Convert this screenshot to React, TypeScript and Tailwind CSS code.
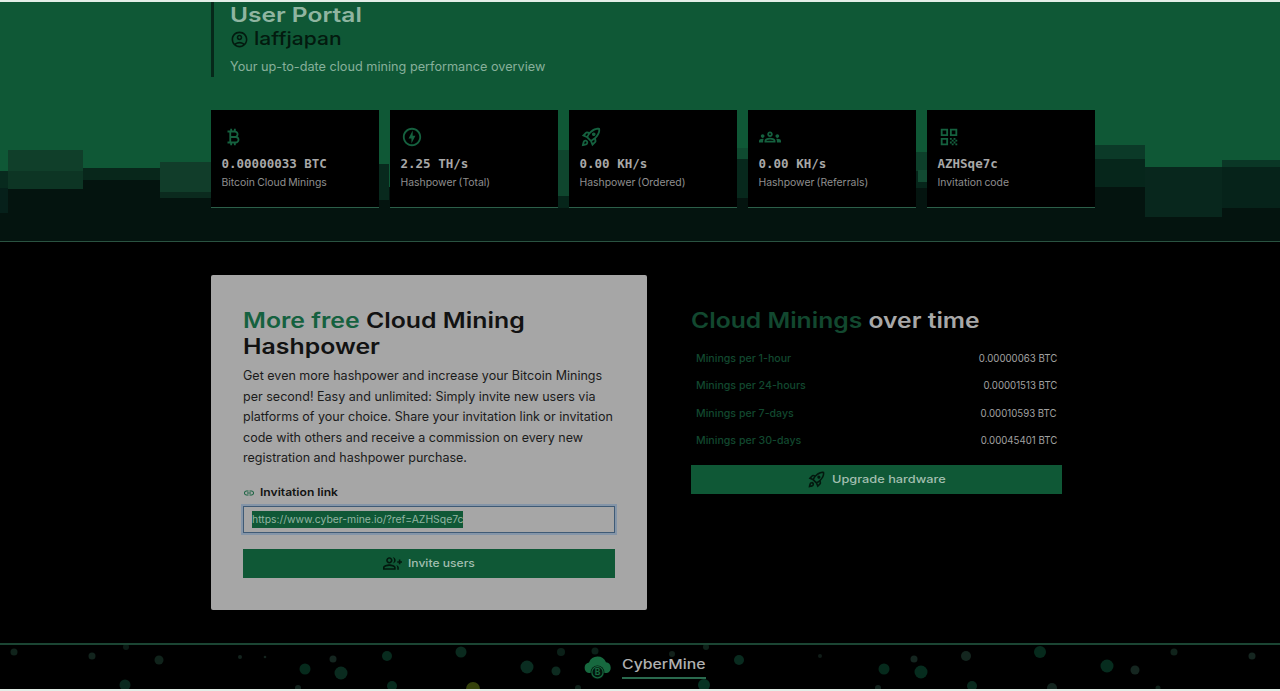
import React from 'react';
import {
  MdCurrencyBitcoin,
  MdLink,
  MdOutlineAccountCircle,
  MdOutlineGroupAdd,
  MdOutlineGroups,
  MdOutlineOfflineBolt,
  MdOutlineRocketLaunch,
  MdQrCode,
} from 'react-icons/md';
import type { IconType } from 'react-icons';

interface Stat {
  icon: IconType;
  value: string;
  label: string;
}

const stats: Stat[] = [
  { icon: MdCurrencyBitcoin, value: '0.00000033 BTC', label: 'Bitcoin Cloud Minings' },
  { icon: MdOutlineOfflineBolt, value: '2.25 TH/s', label: 'Hashpower (Total)' },
  { icon: MdOutlineRocketLaunch, value: '0.00 KH/s', label: 'Hashpower (Ordered)' },
  { icon: MdOutlineGroups, value: '0.00 KH/s', label: 'Hashpower (Referrals)' },
  { icon: MdQrCode, value: 'AZHSqe7c', label: 'Invitation code' },
];

const minings = [
  { label: 'Minings per 1-hour', value: '0.00000063 BTC' },
  { label: 'Minings per 24-hours', value: '0.00001513 BTC' },
  { label: 'Minings per 7-days', value: '0.00010593 BTC' },
  { label: 'Minings per 30-days', value: '0.00045401 BTC' },
];

const paragraph = [
  'Get even more hashpower and increase your Bitcoin Minings',
  'per second! Easy and unlimited: Simply invite new users via',
  'platforms of your choice. Share your invitation link or invitation',
  'code with others and receive a commission on every new',
  'registration and hashpower purchase.',
];

// [x, y, width, height, fill], y counted from the top of the header
const blocks: [number, number, number, number, string][] = [
  [0, 185, 1280, 55, '#04140f'],
  [0, 169, 8, 17, '#082a1e'],
  [0, 186, 8, 25, '#06201a'],
  [8, 148, 75, 21, '#103f2a'],
  [8, 169, 75, 18, '#0d3524'],
  [83, 166, 77, 12, '#08271b'],
  [83, 178, 77, 10, '#04140f'],
  [160, 160, 76, 30, '#113d2a'],
  [160, 190, 76, 6, '#0b2a1e'],
  [313, 162, 76, 36, '#08291d'],
  [545, 148, 30, 46, '#0f462e'],
  [545, 194, 30, 12, '#06251a'],
  [730, 146, 20, 11, '#0f4a30'],
  [730, 157, 20, 39, '#07281c'],
  [910, 150, 8, 19, '#0d3f2a'],
  [910, 169, 8, 11, '#06251a'],
  [918, 150, 12, 18, '#0d3f2a'],
  [918, 168, 12, 12, '#124a32'],
  [910, 180, 20, 6, '#06251a'],
  [1069, 143, 76, 14, '#0b3a28'],
  [1069, 157, 76, 28, '#06261b'],
  [1145, 165, 77, 50, '#08271d'],
  [1222, 158, 58, 7, '#0a3726'],
  [1222, 165, 58, 41, '#06231a'],
];

// [cx, cy, r, fill]
const dots: [number, number, number, string][] = [
  [14, 7, 3.5, '#10231b'], [92, 11, 3.5, '#12241d'], [126, 2, 3, '#0b1b15'],
  [159, 15, 4.5, '#10231b'], [125, 40, 5.5, '#09291e'], [240, 12, 2, '#14241e'],
  [265, 12, 1.3, '#14241e'], [305, 24, 5.5, '#062a1c'], [333, 14, 3.5, '#152620'],
  [341, 28, 6.5, '#0a2b1f'], [387, 11, 5, '#082b1e'], [298, 43, 3, '#14251f'],
  [392, 41, 5, '#082b1e'], [461, 7, 5.5, '#0a2a1e'], [527, 22, 6.5, '#0a2d21'],
  [561, 7, 4, '#0b2018'], [556, 26, 4.5, '#0d2b20'], [595, 6, 3.5, '#0b2018'],
  [473, 44, 7, '#36420b'], [578, 43, 3, '#10231b'], [672, 9, 3, '#12201a'],
  [706, 2, 3, '#0f221a'], [704, 40, 6, '#073323'], [739, 15, 5, '#092b1f'],
  [820, 11, 2, '#101d18'], [884, 24, 5.5, '#062a1c'], [914, 14, 3.5, '#152620'],
  [921, 27, 6.5, '#062c1e'], [966, 11, 5, '#14261f'], [972, 41, 5, '#0a2a1e'],
  [1040, 7, 6, '#062a1c'], [1107, 21, 6.5, '#062c1e'], [1135, 25, 4.5, '#152620'],
  [1174, 7, 3.5, '#10231b'], [1252, 11, 3.5, '#152620'], [1052, 43, 5, '#14251f'],
  [1158, 43, 2.5, '#10231b'], [878, 43, 3, '#14251f'],
];

const Skyline: React.FC = () => (
  <svg className="absolute inset-0" width="1280" height="239" shapeRendering="crispEdges">
    {blocks.map(([x, y, w, h, fill], i) => (
      <rect key={i} x={x} y={y} width={w} height={h} fill={fill} />
    ))}
  </svg>
);

const StatCard: React.FC<Stat> = ({ icon: Icon, value, label }) => (
  <div className="h-[98px] border-b border-[#2c5f49] bg-black pl-[10.5px] pt-[16px]">
    <Icon size={22} className="text-[#15613f]" />
    <p className="mt-[7px] whitespace-nowrap font-['DejaVu_Sans_Mono',monospace] text-[12.5px] font-bold leading-[18px] text-[#a8a8a8]">
      {value}
    </p>
    <p className="mt-[1px] whitespace-nowrap text-[10.4px] leading-[18px] text-[#8f8f8f] [word-spacing:-0.7px]">
      {label}
    </p>
  </div>
);

interface ActionButtonProps {
  icon: IconType;
  labelClass: string;
  textClass: string;
  children: React.ReactNode;
}

const ActionButton: React.FC<ActionButtonProps> = ({ icon: Icon, labelClass, textClass, children }) => (
  <button className="flex h-[29px] w-full items-center justify-center gap-[6px] bg-[#0f5836] text-[11px] font-medium text-[#a3bfb0]">
    <Icon size={19} className="text-[#03180e]" />
    <span className={labelClass}>
      <span className={`block origin-left whitespace-nowrap text-left ${textClass}`}>{children}</span>
    </span>
  </button>
);

const Logo: React.FC = () => (
  <svg width="28" height="24" viewBox="0 0 28 24">
    <path
      d="M5 17A5.4 5.4 0 0 1 5 6.4 9.2 9.2 0 0 1 22 6.2 5.6 5.6 0 0 1 23 17Z"
      fill="#17693f"
    />
    <circle cx="13.5" cy="16.3" r="6.9" fill="#03150d" />
    <circle cx="13.5" cy="16.3" r="5.6" fill="#03150d" stroke="#17693f" strokeWidth="1.2" />
    <text x="13.5" y="19.3" textAnchor="middle" fontSize="8.5" fontWeight="700" fill="#17693f">B</text>
  </svg>
);

const App: React.FC = () => (
  <div className="flex h-[691px] w-[1280px] flex-col overflow-hidden border-y-2 border-[#e4eee8] bg-black font-[Inter,sans-serif]">
    <header className="relative h-[240px] shrink-0 border-b border-[#2a5341] bg-[#0f5836] pl-[211px]">
      <Skyline />
      <div className="relative h-[75px] border-l-[3px] border-[#06281a] pl-4">
        <h1 className="h-[25px] origin-left scale-x-[1.225] text-[20px] font-semibold leading-[26px] text-[#8fb5a1]">
          User Portal
        </h1>
        <div className="flex h-6 items-center gap-[5px] text-[#031a0f]">
          <MdOutlineAccountCircle size={19} />
          <span className="origin-left scale-x-[1.17] text-[18px] font-medium leading-6">laffjapan</span>
        </div>
        <p className="mt-[6px] text-[12.7px] leading-5 text-[#87b09b]">
          Your up-to-date cloud mining performance overview
        </p>
      </div>
      <div className="relative mt-[33px] grid w-[884px] grid-cols-5 gap-[11px]">
        {stats.map(s => (
          <StatCard key={s.label} {...s} />
        ))}
      </div>
    </header>

    <main className="flex h-[401px] shrink-0 gap-[11px] pl-[211px] pt-[33px]">
      <section className="h-[335px] w-[436px] rounded-[2px] bg-[#a6a6a6] px-[32px] pt-[33px]">
        <h2 className="origin-left scale-x-[1.183] whitespace-nowrap text-[21px] font-semibold leading-[26px] text-[#121212]">
          <span className="block"><span className="text-[#15613f]">More free</span> Cloud Mining</span>
          <span className="block">Hashpower</span>
        </h2>
        <p className="mt-[6px] text-[12.54px] leading-[20.5px] text-[#1b1b1b]">
          {paragraph.map(line => (
            <span key={line} className="block whitespace-nowrap">{line}</span>
          ))}
        </p>
        <div className="mt-[14px] flex h-5 items-center gap-[5px]">
          <MdLink size={12} className="text-[#15613f]" />
          <span className="origin-left scale-x-[1.1] text-[11px] font-semibold text-[#121212]">Invitation link</span>
        </div>
        <div className="mt-[3px] flex h-[27px] items-center border border-[#3f5a75] px-2 ring-2 ring-[#8495a8]">
          <span className="bg-[#0f5836] text-[10.4px] leading-[17px] text-[#92b5a2]">
            https://www.cyber-mine.io/?ref=AZHSqe7c
          </span>
        </div>
        <div className="mt-4">
          <ActionButton icon={MdOutlineGroupAdd} labelClass="w-[67px]" textClass="scale-x-[1.1]">
            Invite users
          </ActionButton>
        </div>
      </section>

      <section className="w-[437px] px-[33px] pt-[33px]">
        <h2 className="origin-left scale-x-[1.175] whitespace-nowrap text-[21px] font-semibold leading-[26px] text-[#a8a8a8]">
          <span className="text-[#12482f]">Cloud Minings</span> over time
        </h2>
        <ul className="mb-[10px] mt-[11px] px-[5px]">
          {minings.map(m => (
            <li key={m.label} className="flex h-[27.4px] items-center justify-between text-[10.5px]">
              <span className="origin-left scale-x-[1.01] font-medium text-[#12482f]">{m.label}</span>
              <span className="origin-right scale-x-[0.92] text-[#a0a0a0]">{m.value}</span>
            </li>
          ))}
        </ul>
        <ActionButton icon={MdOutlineRocketLaunch} labelClass="w-[114px]" textClass="scale-x-[1.16]">
          Upgrade hardware
        </ActionButton>
      </section>
    </main>

    <footer className="relative flex flex-1 justify-center border-t-2 border-[#1b4533] pl-[9px]">
      <svg className="absolute inset-0" width="1280" height="44">
        {dots.map(([cx, cy, r, fill], i) => (
          <circle key={i} cx={cx} cy={cy} r={r} fill={fill} />
        ))}
      </svg>
      <div className="relative flex gap-[10px] pt-[11px]">
        <Logo />
        <div className="h-[23px] w-[84px] border-b-2 border-[#2a6a4e]">
          <span className="block origin-left scale-x-[1.217] text-[13px] font-medium leading-[17px] text-[#b0b0b0]">
            CyberMine
          </span>
        </div>
      </div>
    </footer>
  </div>
);

export default App;
